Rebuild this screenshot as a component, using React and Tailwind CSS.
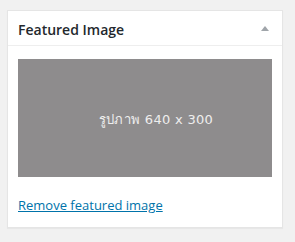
export default function App() {
  return (
    <div className="min-h-[242px] w-full bg-[#f1f1f1] pt-[10px] pl-[7px]" style={{ fontFamily: '"Open Sans", "Noto Sans", sans-serif' }}>
      <div className="w-[276px] h-[218px] bg-white border border-[#e5e5e5] shadow-[0_1px_1px_rgba(0,0,0,0.04)]">
        {/* header */}
        <div className="flex items-center justify-between h-[35px] border-b border-[#eeeeee] pl-[10px] pr-[13px] pt-[3px]">
          <h2 className="text-[14px] font-semibold text-[#23282d] leading-none">Featured Image</h2>
          <svg width="8" height="5" viewBox="0 0 8 5" className="mt-[-2px]">
            <path d="M4 0 L8 5 L0 5 Z" fill="#a0a5aa" />
          </svg>
        </div>

        {/* body */}
        <div className="pt-[13px] pl-[10px]">
          <div className="w-[254px] h-[118px] bg-[#8e8c8d] flex items-center justify-center pl-[22px] pt-[4px]">
            <span className="text-[13px] text-[#eeeeee] tracking-[0.3px]" style={{ fontFamily: '"DejaVu Sans", "Noto Sans", sans-serif' }}>
              รูปภาพ 640 x 300
            </span>
          </div>
          <a href="#" className="inline-block mt-[19px] text-[13px] leading-[19px] text-[#0073aa] underline">
            Remove featured image
          </a>
        </div>
      </div>
    </div>
  );
}
